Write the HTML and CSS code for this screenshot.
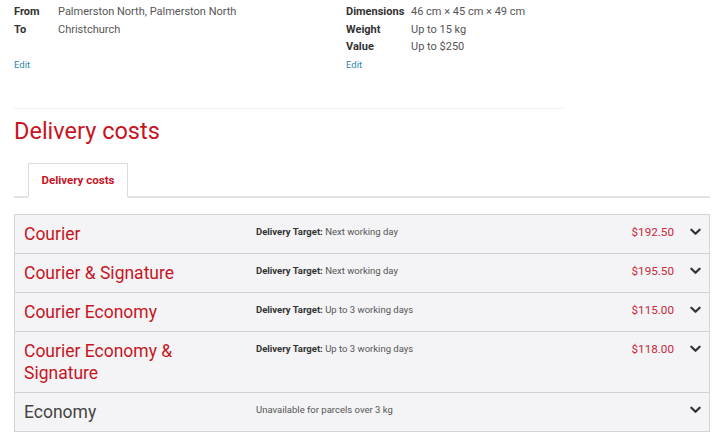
FILE: index.html
```html
<!DOCTYPE html>
<html>
<head>
<meta charset="utf-8">
<link rel="stylesheet" href="styles.css">
</head>
<body>
<div class="page">
  <div class="summary">
    <div class="block">
      <dl class="facts left">
        <dt>From</dt><dd>Palmerston North, Palmerston North</dd>
        <dt>To</dt><dd>Christchurch</dd>
        <dt>&nbsp;</dt><dd>&nbsp;</dd>
      </dl>
      <a class="edit" href="#">Edit</a>
    </div>
    <div class="block">
      <dl class="facts right">
        <dt>Dimensions</dt><dd>46 cm × 45 cm × 49 cm</dd>
        <dt>Weight</dt><dd>Up to 15 kg</dd>
        <dt>Value</dt><dd>Up to $250</dd>
      </dl>
      <a class="edit" href="#">Edit</a>
    </div>
  </div>
  <hr class="divider">
  <h1 class="title">Delivery costs</h1>
  <div class="tabs">
    <div class="tab">Delivery costs</div>
  </div>
  <div class="list">
    <div class="row">
      <div class="name">Courier</div>
      <div class="target"><b>Delivery Target:</b> Next working day</div>
      <div class="price">$192.50</div>
      <svg class="chev" viewBox="0 0 12 8"><path d="M1.5 1.5 L6 6 L10.5 1.5" fill="none" stroke="#333" stroke-width="2.4" stroke-linecap="round" stroke-linejoin="round"/></svg>
    </div>
    <div class="row">
      <div class="name">Courier &amp; Signature</div>
      <div class="target"><b>Delivery Target:</b> Next working day</div>
      <div class="price">$195.50</div>
      <svg class="chev" viewBox="0 0 12 8"><path d="M1.5 1.5 L6 6 L10.5 1.5" fill="none" stroke="#333" stroke-width="2.4" stroke-linecap="round" stroke-linejoin="round"/></svg>
    </div>
    <div class="row">
      <div class="name">Courier Economy</div>
      <div class="target"><b>Delivery Target:</b> Up to 3 working days</div>
      <div class="price">$115.00</div>
      <svg class="chev" viewBox="0 0 12 8"><path d="M1.5 1.5 L6 6 L10.5 1.5" fill="none" stroke="#333" stroke-width="2.4" stroke-linecap="round" stroke-linejoin="round"/></svg>
    </div>
    <div class="row">
      <div class="name">Courier Economy &amp; Signature</div>
      <div class="target"><b>Delivery Target:</b> Up to 3 working days</div>
      <div class="price">$118.00</div>
      <svg class="chev" viewBox="0 0 12 8"><path d="M1.5 1.5 L6 6 L10.5 1.5" fill="none" stroke="#333" stroke-width="2.4" stroke-linecap="round" stroke-linejoin="round"/></svg>
    </div>
    <div class="row disabled">
      <div class="name">Economy</div>
      <div class="target">Unavailable for parcels over 3 kg</div>
      <div class="price"></div>
      <svg class="chev" viewBox="0 0 12 8"><path d="M1.5 1.5 L6 6 L10.5 1.5" fill="none" stroke="#333" stroke-width="2.4" stroke-linecap="round" stroke-linejoin="round"/></svg>
    </div>
  </div>
</div>
</body>
</html>
```

FILE: styles.css
```css
html, body {
  margin: 0;
  padding: 0;
  background: #fff;
}
body {
  font-family: Roboto, "Liberation Sans", sans-serif;
  color: #444;
}
.page {
  padding: 3px 10px 0 14px;
}
.summary {
  display: grid;
  grid-template-columns: 332px 1fr;
}
.facts {
  display: grid;
  margin: 0;
  font-size: 11px;
  line-height: 17.5px;
}
.facts.left { grid-template-columns: 44px auto; }
.facts.right { grid-template-columns: 65px auto; }
.facts dt {
  font-weight: 700;
  color: #333;
}
.facts dd {
  margin: 0;
  color: #555;
}
.edit {
  display: block;
  margin-top: 3px;
  font-size: 9.5px;
  line-height: 12px;
  color: #2f86b0;
  text-decoration: none;
}
.divider {
  width: 549px;
  margin: 37px 0 0 0;
  border: 0;
  border-top: 1px solid #f0f0f0;
  height: 0;
}
.title {
  margin: 8px 0 0 0;
  font-size: 23.5px;
  line-height: 28px;
  font-weight: 400;
  color: #c8141e;
}
.tabs {
  margin-top: 18px;
  border-bottom: 2px solid #e3e3e3;
  padding-left: 14px;
  display: flex;
}
.tab {
  width: 98px;
  height: 32px;
  margin-bottom: -2px;
  border: 1px solid #dcdcdc;
  border-bottom: 2px solid #fff;
  background: #fff;
  font-size: 11.5px;
  font-weight: 700;
  color: #c8141e;
  display: flex;
  align-items: center;
  justify-content: center;
}
.list {
  margin-top: 16px;
  border: 1px solid #d4d4d4;
  background: #f4f4f6;
}
.row {
  display: grid;
  grid-template-columns: 232px 1fr auto 35px;
  align-items: start;
  padding: 8px 0 7.5px 9px;
  border-top: 1px solid #d0d0d0;
}
.row:first-child { border-top: 0; }
.name {
  font-size: 17.5px;
  line-height: 22.5px;
  color: #c8141e;
  padding-right: 20px;
}
.disabled .name { color: #444; }
.target {
  font-size: 9.5px;
  line-height: 14px;
  padding-top: 2px;
  color: #555;
}
.target b { color: #333; font-weight: 700; }
.price {
  font-size: 11.7px;
  line-height: 16px;
  padding-top: 1px;
  color: #c8283a;
}
.chev {
  width: 11px;
  height: 8px;
  margin: 5px 0 0 16px;
}
```
